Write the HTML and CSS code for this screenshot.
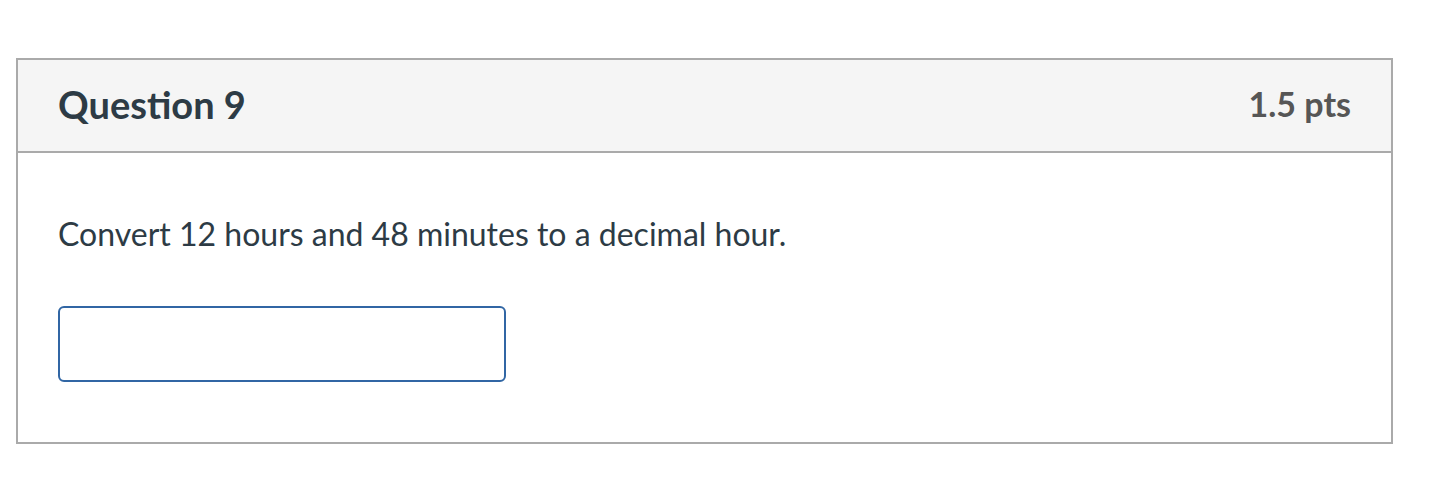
FILE: index.html
```html
<!DOCTYPE html>
<html lang="en">
    <head>
        <meta charset="UTF-8" />
        <meta name="viewport" content="width=device-width, initial-scale=1.0" />
        <title>Question 9</title>
        <link rel="stylesheet" href="styles.css">
    </head>
    <body>
        <div class="question">
            <div class="question_header">
                <h2 class="question_name">Question 9</h2>
                <span class="question_points">1.5 pts</span>
            </div>
            <div class="question_body">
                <p class="question_text">Convert 12 hours and 48 minutes to a decimal hour.</p>
                <input type="text" class="answer_input" />
            </div>
        </div>
    </body>
</html>
```
FILE: styles.css
```css
body {
    margin: 0;
    font-family: "Lato", "Liberation Sans", sans-serif;
    background: #ffffff;
    color: #2d3b45;
}

.question {
    margin: 58px 0 0 16px;
    width: 1377px;
    box-sizing: border-box;
    border: 2px solid #aaaaaa;
}

.question_header {
    display: flex;
    align-items: center;
    justify-content: space-between;
    height: 93px;
    padding: 0 40px 4px;
    box-sizing: border-box;
    background: #f5f5f5;
    border-bottom: 2px solid #aaaaaa;
}

.question_name {
    margin: 0;
    font-size: 38px;
    font-weight: bold;
    color: #2d3b45;
}

.question_points {
    font-size: 34px;
    font-weight: bold;
    color: #565656;
}

.question_body {
    padding: 62px 40px 60px;
}

.question_text {
    margin: 0 0 53px;
    font-size: 32px;
    line-height: 38px;
}

.answer_input {
    display: block;
    width: 448px;
    height: 76px;
    box-sizing: border-box;
    border: 2px solid #3166a4;
    border-radius: 6px;
    outline: none;
    font-family: inherit;
    font-size: 26px;
}
```
